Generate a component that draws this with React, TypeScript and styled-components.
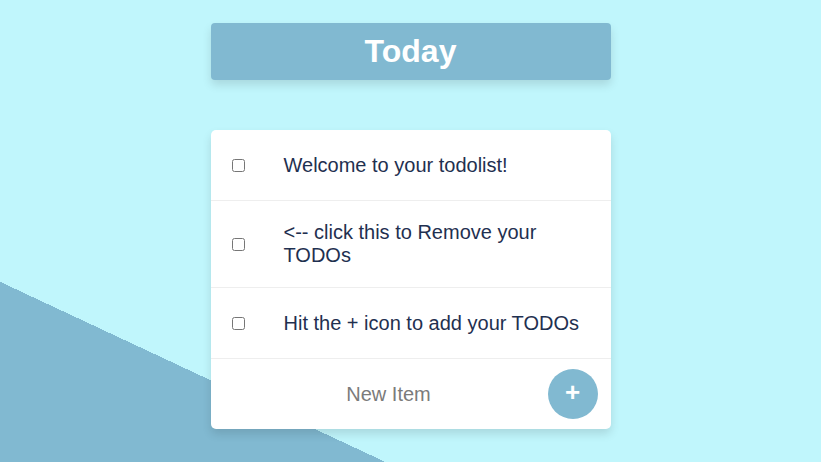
import React from "react";
import styled, { createGlobalStyle } from "styled-components";

const Global = createGlobalStyle`
  html, body { margin: 0; padding: 0; }
  body {
    min-height: 100vh;
    font-family: "Liberation Sans", Arial, sans-serif;
    background: linear-gradient(205.06deg, #c0f6fc 0, #c0f6fc 603px, #81b9d1 603px, #81b9d1 100%);
    background-color: #c0f6fc;
  }
`;

const Page = styled.div`
  display: flex;
  flex-direction: column;
  align-items: center;
  padding-top: 23px;
`;

const Header = styled.div`
  width: 400px;
  height: 57px;
  box-sizing: border-box;
  background: #81b9d1;
  border-radius: 4px;
  box-shadow: 0 5px 10px rgba(0, 0, 0, 0.12);
  display: flex;
  align-items: center;
  justify-content: center;
`;

const Title = styled.h1`
  margin: 0;
  color: #fff;
  font-size: 32px;
  font-weight: bold;
  font-family: "Liberation Sans", Arial, sans-serif;
`;

const Card = styled.div`
  margin-top: 50px;
  width: 400px;
  background: #fff;
  border-radius: 5px;
  box-shadow: 0 5px 10px rgba(0, 0, 0, 0.12);
  display: flex;
  flex-direction: column;
`;

const Row = styled.div`
  display: flex;
  align-items: center;
  box-sizing: border-box;
  min-height: 71px;
  padding: 20px 20px 20px 18px;
  border-bottom: 1px solid #eeeeee;
`;

const Check = styled.input`
  width: 13px;
  height: 13px;
  margin: 0 39px 0 3px;
  flex: none;
`;

const Text = styled.p`
  margin: 0;
  font-size: 20px;
  line-height: 23px;
  color: #1f3050;
`;

const Footer = styled.form`
  display: flex;
  align-items: center;
  height: 70px;
  padding: 0 13px 0 19px;
`;

const NewInput = styled.input`
  flex: 1;
  min-width: 0;
  border: none;
  outline: none;
  background: transparent;
  text-align: center;
  font-size: 20px;
  font-family: "Liberation Sans", Arial, sans-serif;
  color: #333;
  &::placeholder { color: #7b7b7b; }
`;

const AddButton = styled.button`
  width: 50px;
  height: 50px;
  border-radius: 50%;
  border: none;
  background: #81b9d1;
  color: #fff;
  font-size: 26px;
  font-weight: bold;
  font-family: "Liberation Sans", Arial, sans-serif;
  display: flex;
  align-items: center;
  justify-content: center;
  padding: 0 0 3px 0;
  flex: none;
`;

const items = [
  "Welcome to your todolist!",
  "<-- click this to Remove your TODOs",
  "Hit the + icon to add your TODOs",
];

export default function App() {
  return (
    <>
      <Global />
      <Page>
        <Header>
          <Title>Today</Title>
        </Header>
        <Card>
          {items.map((t) => (
            <Row key={t}>
              <Check type="checkbox" />
              <Text>{t}</Text>
            </Row>
          ))}
          <Footer onSubmit={(e) => e.preventDefault()}>
            <NewInput type="text" placeholder="New Item" />
            <AddButton type="submit">+</AddButton>
          </Footer>
        </Card>
      </Page>
    </>
  );
}
